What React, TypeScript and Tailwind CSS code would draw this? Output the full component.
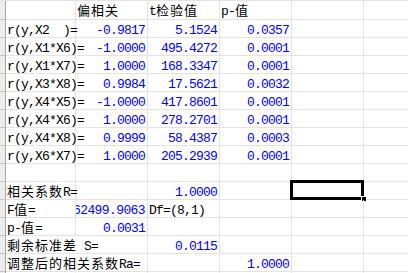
type Cell = { t?: string; r?: boolean; blue?: boolean; clip?: boolean; sel?: boolean; spill?: boolean };

const L = (t: string): Cell => ({ t });
const S = (t: string): Cell => ({ t, spill: true });
const N = (t: string): Cell => ({ t, r: true, blue: true });
const E: Cell = {};

const rows: Cell[][] = [
  [E, L('偏相关'), L('t检验值'), L('p-值'), E],
  [L('r(y,X2  )='), N('-0.9817'), N('5.1524'), N('0.0357'), E],
  [L('r(y,X1*X6)='), N('-1.0000'), N('495.4272'), N('0.0001'), E],
  [L('r(y,X1*X7)='), N('1.0000'), N('168.3347'), N('0.0001'), E],
  [L('r(y,X3*X8)='), N('0.9984'), N('17.5621'), N('0.0032'), E],
  [L('r(y,X4*X5)='), N('-1.0000'), N('417.8601'), N('0.0001'), E],
  [L('r(y,X4*X6)='), N('1.0000'), N('278.2701'), N('0.0001'), E],
  [L('r(y,X4*X8)='), N('0.9999'), N('58.4387'), N('0.0003'), E],
  [L('r(y,X6*X7)='), N('1.0000'), N('205.2939'), N('0.0001'), E],
  [E, E, E, E, E],
  [L('相关系数R='), E, N('1.0000'), E, { sel: true }],
  [L('F值='), { t: '62499.9063', r: true, blue: true, clip: true }, L('Df=(8,1)'), E, E],
  [L('p-值='), N('0.0031'), E, E, E],
  [S('剩余标准差 S='), E, N('0.0115'), E, E],
  [S('调整后的相关系数Ra='), E, E, N('1.0000'), E],
  [E, E, E, E, E],
];

// split into CJK / ascii runs so the wide glyphs get 2x the ascii advance
function Txt({ t }: { t: string }) {
  const parts = t.match(/[\u3000-\u9fff\uff00-\uffef]+|[^\u3000-\u9fff\uff00-\uffef]+/g) || [];
  return (
    <>
      {parts.map((p, i) =>
        /[\u3000-\u9fff\uff00-\uffef]/.test(p) ? (
          <span key={i} className="tracking-[1px] leading-[12px] [font-family:'Noto_Sans_CJK_SC',sans-serif]">
            {p}
          </span>
        ) : (
          <span key={i}>{p}</span>
        )
      )}
    </>
  );
}

export default function App() {
  return (
    <div className="w-[408px] h-[273px] overflow-hidden bg-white text-[13px] tracking-[-0.8px] text-black [font-family:'Liberation_Mono','Noto_Sans_CJK_SC',monospace]">
      <div className="grid grid-cols-[6px_70px_72px_72px_72px_72px_1fr] border-t border-[#e3e3e3]">
        {rows.map((row, ri) => {
          const h = ri === 0 ? 'h-[19px]' : 'h-[18px]';
          return [
            <div key={`h${ri}`} className={`${h} bg-[#ececec] border-r border-b border-r-[#a8a8a8] border-b-[#c4c4c4]`} />,
            ...row.map((c, ci) => (
              <div
                key={`${ri}-${ci}`}
                className={`relative ${h} border-b border-[#e3e3e3] ${c.spill ? '' : 'border-r'} ${c.clip ? 'overflow-hidden' : ''}`}
              >
                {c.t && (
                  <div
                    className={`whitespace-pre leading-[17px] pt-[2px] ${c.r ? 'flex justify-end pr-[2px]' : 'pl-[1px]'} ${c.blue ? 'text-[#0000ff]' : ''} ${c.clip ? 'tracking-[-0.6px]' : ''}`}
                  >
                    <Txt t={c.t} />
                  </div>
                )}
                {c.sel && (
                  <>
                    <div className="absolute left-[-2px] top-[-2px] w-[74px] h-[20px] border-[3px] border-black" />
                    <div className="absolute right-[-4px] bottom-[-3px] w-[6px] h-[6px] bg-black border border-white" />
                  </>
                )}
              </div>
            )),
            <div key={`f${ri}`} className={`${h} border-b border-[#e3e3e3]`} />,
          ];
        })}
      </div>
    </div>
  );
}
